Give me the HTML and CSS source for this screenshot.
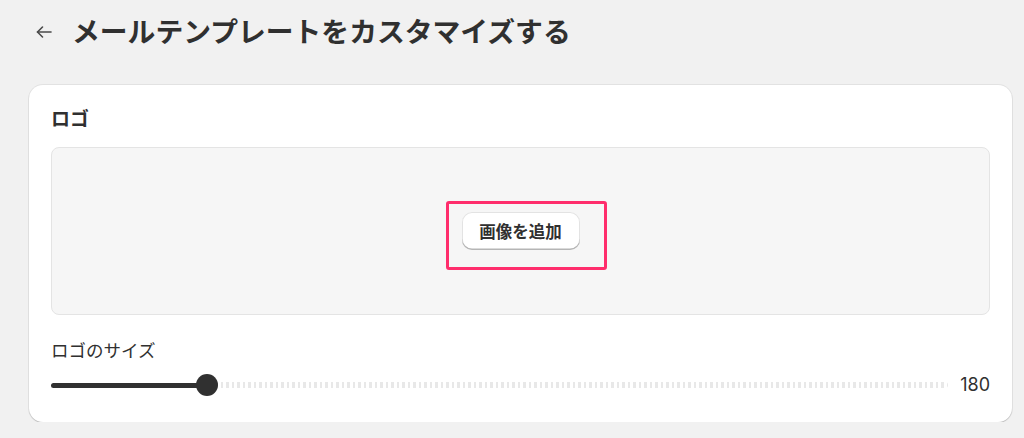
FILE: index.html
```html
<!DOCTYPE html>
<html lang="ja">
<head>
<meta charset="utf-8">
<link rel="stylesheet" href="styles.css">
</head>
<body>
  <header class="page-header">
    <button class="back-btn" aria-label="戻る">
      <svg width="18" height="18" viewBox="0 0 18 18" fill="none" stroke="#4a4a4a" stroke-width="1.6" stroke-linecap="round" stroke-linejoin="round">
        <path d="M16 9H2.5"/>
        <path d="M7.5 4L2.5 9L7.5 14"/>
      </svg>
    </button>
    <h1 class="page-title">メールテンプレートをカスタマイズする</h1>
  </header>

  <section class="card">
    <h2 class="card-title">ロゴ</h2>
    <div class="dropzone">
      <div class="btn-wrap">
        <button class="add-btn">画像を追加</button>
        <span class="highlight"></span>
      </div>
    </div>
    <div class="field-label">ロゴのサイズ</div>
    <div class="slider-row">
      <div class="slider">
        <div class="slider-fill" style="width:156px"></div>
        <div class="slider-rest"></div>
        <div class="slider-thumb" style="left:145px"></div>
      </div>
      <span class="slider-value">180</span>
    </div>
  </section>
</body>
</html>
```

FILE: styles.css
```css
* { box-sizing: border-box; }

html, body {
  margin: 0;
  padding: 0;
  background: #f1f1f1;
  font-family: Inter, "Noto Sans CJK JP", sans-serif;
  color: #303030;
}

.page-header {
  display: flex;
  align-items: center;
  height: 36px;
  margin-top: 14px;
  padding-left: 35px;
}

.back-btn {
  display: flex;
  align-items: center;
  justify-content: center;
  width: 18px;
  height: 18px;
  padding: 0;
  margin: 0 19px 0 0;
  border: 0;
  background: none;
}

.page-title {
  margin: 0;
  font-size: 27.8px;
  line-height: 36px;
  font-weight: 700;
  color: #303030;
}

.card {
  margin: 35px 0 0 29px;
  width: 983px;
  background: #fff;
  border-radius: 14px;
  padding: 22px 22px 25px 22px;
  box-shadow: 0 0 0 1px rgba(0,0,0,0.06), 0 1px 1px rgba(0,0,0,0.16);
}

.card-title {
  margin: 0;
  font-size: 19px;
  line-height: 26px;
  font-weight: 700;
}

.dropzone {
  margin-top: 14px;
  height: 168px;
  background: #f6f6f6;
  border: 1px solid #e4e4e4;
  border-radius: 8px;
  display: flex;
  align-items: center;
  justify-content: center;
}

.btn-wrap {
  position: relative;
  display: flex;
}

.add-btn {
  width: 118px;
  height: 38px;
  background: #fff;
  border: 0;
  border-radius: 10px;
  font-family: "Noto Sans CJK JP", sans-serif;
  font-size: 16.5px;
  font-weight: 600;
  color: #303030;
  padding: 0;
  box-shadow: inset 0 -1.5px 0 #b5b5b5, inset 0 0 0 1px #e3e3e3;
}

.highlight {
  position: absolute;
  left: -16px;
  top: -11px;
  width: 161px;
  height: 69px;
  border: 3px solid #ff2d6c;
  border-radius: 3px;
  pointer-events: none;
}

.field-label {
  margin-top: 24px;
  font-size: 17.5px;
  line-height: 24px;
  font-weight: 400;
  color: #303030;
}

.slider-row {
  margin-top: 10px;
  display: flex;
  align-items: center;
  height: 24px;
  gap: 12px;
}

.slider {
  position: relative;
  flex: 1;
  height: 24px;
  display: flex;
  align-items: center;
}

.slider-fill {
  height: 5px;
  background: #303030;
  border-radius: 3px 0 0 3px;
}

.slider-rest {
  flex: 1;
  height: 6px;
  border-radius: 0 4px 4px 0;
  background: repeating-linear-gradient(90deg, transparent 0 3px, #e8e8e8 3px 5.5px);
}

.slider-thumb {
  position: absolute;
  top: 1px;
  width: 22px;
  height: 22px;
  border-radius: 50%;
  background: #303030;
}

.slider-value {
  width: 30px;
  font-size: 18px;
  line-height: 24px;
  text-align: right;
  color: #303030;
}
```
